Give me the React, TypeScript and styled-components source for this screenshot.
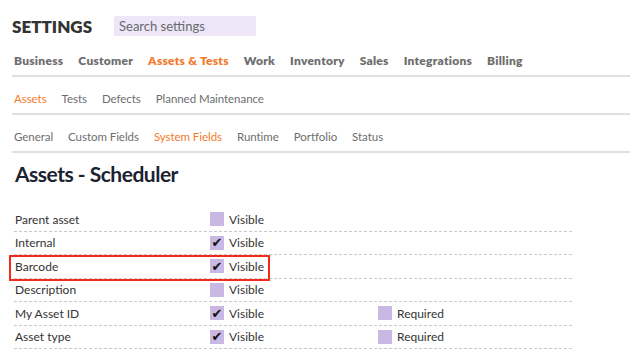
import styled, { createGlobalStyle } from "styled-components";

const Global = createGlobalStyle`
  body {
    margin: 0;
    background: #fff;
    font-family: Lato, "Noto Sans", sans-serif;
    color: #333;
  }
`;

const Page = styled.div`
  padding: 0 0 0 12px;
`;

const Header = styled.div`
  display: flex;
  align-items: center;
  height: 24px;
  margin-top: 14px;
`;

const Title = styled.div`
  font-size: 17px;
  font-weight: 800;
  color: #333;
  width: 102px;
`;

const Search = styled.input`
  appearance: none;
  border: 0;
  outline: 0;
  box-sizing: border-box;
  width: 142px;
  height: 20px;
  padding: 0 5px;
  background: #ece6f8;
  font-family: inherit;
  font-size: 13px;
  color: #555;

  &::placeholder {
    color: #6a6a6a;
  }
`;

const Nav = styled.div<{ $top: number; $bold?: boolean }>`
  display: flex;
  align-items: center;
  gap: 15px;
  height: 30px;
  padding: 0 0 1px 2px;
  box-sizing: border-box;
  margin-top: ${(p) => p.$top}px;
  border-bottom: 2px solid #e0e0e0;
  font-size: ${(p) => (p.$bold ? 12 : 11.5)}px;
  font-weight: ${(p) => (p.$bold ? 800 : 400)};
  letter-spacing: ${(p) => (p.$bold ? 0.25 : -0.05)}px;
`;

const NavItem = styled.span<{ $active?: boolean }>`
  color: ${(p) => (p.$active ? "#f47a2c" : "#6e6e6e")};
  white-space: nowrap;
`;

const Heading = styled.h1`
  margin: 8px 0 0 3px;
  height: 47px;
  font-size: 21px;
  font-weight: 700;
  color: #1d2230;
  letter-spacing: -0.5px;
`;

const Rows = styled.div`
  width: 558px;
  margin-left: 2px;
`;

const Row = styled.div`
  position: relative;
  display: flex;
  align-items: center;
  height: 22.5px;
  border-bottom: 1px dashed #c9c9c9;
  font-size: 12px;
  color: #333;
`;

const Label = styled.span`
  width: 195px;
  padding-left: 1px;
`;

const Field = styled.span`
  display: flex;
  align-items: center;
  gap: 5px;
  width: 168px;
`;

const Box = styled.span`
  display: inline-flex;
  align-items: center;
  justify-content: center;
  width: 14px;
  height: 14px;
  background: #c9b8e4;
  color: #111;
  font-family: "DejaVu Sans", sans-serif;
  font-size: 13px;
  line-height: 1;
`;

const Highlight = styled.div`
  position: absolute;
  left: -5px;
  top: 0;
  width: 261px;
  height: 26px;
  box-sizing: border-box;
  border: 2px solid #f2291b;
  pointer-events: none;
`;

const topNav = ["Business", "Customer", "Assets & Tests", "Work", "Inventory", "Sales", "Integrations", "Billing"];
const subNav = ["Assets", "Tests", "Defects", "Planned Maintenance"];
const tabNav = ["General", "Custom Fields", "System Fields", "Runtime", "Portfolio", "Status"];

const fields = [
  { name: "Parent asset", visible: false },
  { name: "Internal", visible: true },
  { name: "Barcode", visible: true, mark: true },
  { name: "Description", visible: false },
  { name: "My Asset ID", visible: true, required: true },
  { name: "Asset type", visible: true, required: true },
];

export default function App() {
  return (
    <Page>
      <Global />
      <Header>
        <Title>SETTINGS</Title>
        <Search placeholder="Search settings" />
      </Header>

      <Nav $top={9} $bold>
        {topNav.map((n) => (
          <NavItem key={n} $active={n === "Assets & Tests"}>{n}</NavItem>
        ))}
      </Nav>
      <Nav $top={8}>
        {subNav.map((n) => (
          <NavItem key={n} $active={n === "Assets"}>{n}</NavItem>
        ))}
      </Nav>
      <Nav $top={8}>
        {tabNav.map((n) => (
          <NavItem key={n} $active={n === "System Fields"}>{n}</NavItem>
        ))}
      </Nav>

      <Heading>Assets - Scheduler</Heading>

      <Rows>
        {fields.map((f) => (
          <Row key={f.name}>
            <Label>{f.name}</Label>
            <Field>
              <Box>{f.visible ? "✔" : ""}</Box>
              Visible
            </Field>
            {f.required && (
              <Field>
                <Box />
                Required
              </Field>
            )}
            {f.mark && <Highlight />}
          </Row>
        ))}
      </Rows>
    </Page>
  );
}
